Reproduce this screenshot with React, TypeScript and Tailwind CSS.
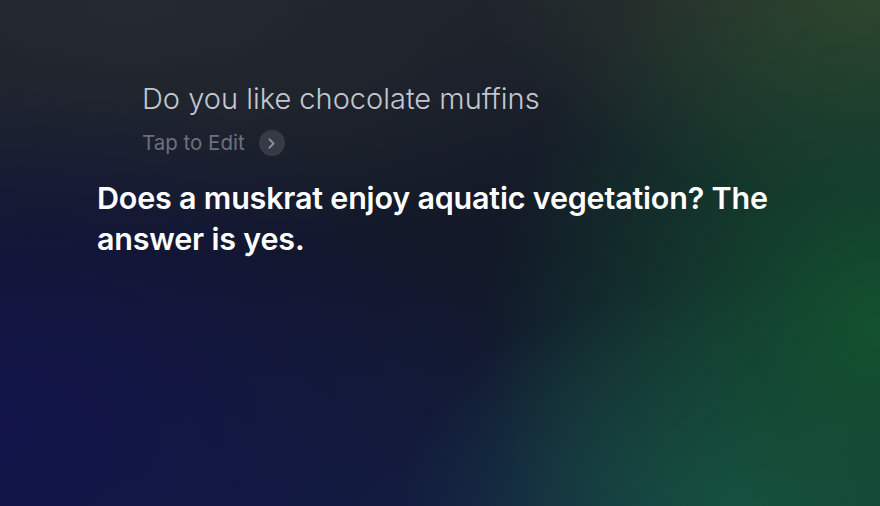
import { ChevronRight } from "lucide-react";

const App: React.FC = () => {
  return (
    <div
      className="w-[880px] h-[506px] overflow-hidden bg-[#141a2a] bg-[radial-gradient(ellipse_60%_70%_at_0%_85%,#12144a_0%,transparent_100%),radial-gradient(ellipse_45%_80%_at_100%_65%,#13522f_0%,transparent_100%),radial-gradient(ellipse_40%_45%_at_85%_100%,#18504a_0%,transparent_100%),radial-gradient(ellipse_45%_40%_at_100%_0%,#34432e_0%,transparent_100%),radial-gradient(ellipse_60%_50%_at_15%_0%,#252a31_0%,transparent_100%),linear-gradient(180deg,#1c2129_0%,#121827_50%,#131d3c_100%)]"
      style={{ fontFamily: "Inter, 'Noto Sans', sans-serif" }}
    >
      {/* Siri request */}
      <div className="pl-[142px] pt-[79px]">
        <p className="text-[29px] leading-[40px] font-light text-[#c3c7cf]">
          Do you like chocolate muffins
        </p>
        <div className="flex items-center gap-[14px] mt-[11px]">
          <span className="text-[20.5px] leading-[26px] text-[#6c717b]">Tap to Edit</span>
          <span className="w-[26px] h-[26px] rounded-full bg-[#363a44] flex items-center justify-center">
            <ChevronRight size={17} strokeWidth={2.5} className="text-[#8a8f99]" />
          </span>
        </div>
      </div>

      {/* Siri response */}
      <p className="ml-[97px] mt-[21px] w-[720px] text-[30.5px] leading-[41px] font-semibold text-white tracking-[-0.2px]">
        Does a muskrat enjoy aquatic vegetation? The answer is yes.
      </p>
    </div>
  );
};

export default App;
